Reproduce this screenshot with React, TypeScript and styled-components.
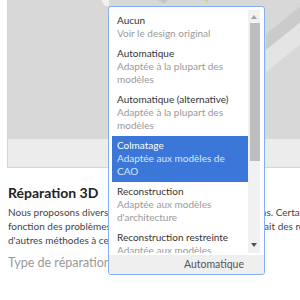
import React from "react";
import styled, { createGlobalStyle } from "styled-components";

const GlobalStyle = createGlobalStyle`
  html, body { margin: 0; padding: 0; background: #fff; overflow: hidden; }
  body { font-family: Lato, "Open Sans", sans-serif; }
`;

const Page = styled.div`
  position: relative;
  width: 300px;
  height: 300px;
  padding-left: 7px;
  box-sizing: border-box;
  overflow: hidden;
`;

const Card = styled.div`
  width: 340px;
  border: 1px solid #d4d4d4;
  border-top: none;
`;

const Preview = styled.div`
  height: 139px;
  background: #d8d8d8;
  svg { display: block; }
`;

const Strip = styled.div`
  height: 28px;
  background: #ececec;
`;

const Content = styled.div`
  padding: 15px 0 0 1px;
`;

const Heading = styled.h2`
  margin: 0;
  font-family: Lato, sans-serif;
  font-weight: 700;
  font-size: 14px;
  line-height: 19px;
  color: #222;
`;

const Body = styled.div`
  margin-top: 3px;
  font-size: 10px;
  line-height: 14px;
  color: #444;
`;

const Line = styled.div`
  white-space: nowrap;
`;

const TypeRow = styled.div`
  margin-top: 8px;
  font-size: 12.5px;
  line-height: 16px;
  color: #999;
`;

const Dropdown = styled.div`
  position: absolute;
  left: 108px;
  top: 6px;
  width: 157px;
  height: 269px;
  box-sizing: border-box;
  border: 1px solid #86aef0;
  border-radius: 3px;
  background: #fff;
  display: flex;
  flex-direction: column;
  overflow: hidden;
`;

const DropBody = styled.div`
  flex: 1;
  min-height: 0;
  display: flex;
  padding: 3px 4px 0 3px;
`;

const List = styled.div`
  flex: 1;
  min-width: 0;
  overflow: hidden;
  padding-top: 1px;
`;

const Item = styled.div<{ $selected?: boolean }>`
  padding: 3px 5px 4px;
  font-size: 10px;
  line-height: 13px;
  background: ${(p) => (p.$selected ? "#3a77d8" : "transparent")};
`;

const Title = styled.div<{ $selected?: boolean }>`
  color: ${(p) => (p.$selected ? "#fff" : "#333")};
`;

const Sub = styled.div<{ $selected?: boolean }>`
  color: ${(p) => (p.$selected ? "#dbe6f8" : "#9a9a9a")};
`;

const Scrollbar = styled.div`
  width: 12px;
  background: #f1f1f1;
  display: flex;
  flex-direction: column;
  align-items: flex-end;
`;

const Arrow = styled.div<{ $down?: boolean }>`
  width: 12px;
  height: ${(p) => (p.$down ? "17px" : "13px")};
  display: flex;
  justify-content: center;
  align-items: center;
  svg { display: block; }
`;

const Thumb = styled.div`
  width: 10px;
  height: 138px;
  background: #bdbdbd;
`;

const Track = styled.div`
  flex: 1;
`;

const Footer = styled.div`
  margin-top: 2px;
  height: 19px;
  background: #efefef;
  text-align: right;
  padding-right: 20px;
  font-size: 10.5px;
  line-height: 19px;
  color: #555;
`;

const options = [
  { title: "Aucun", sub: "Voir le design original" },
  { title: "Automatique", sub: "Adaptée à la plupart des modèles" },
  { title: "Automatique (alternative)", sub: "Adaptée à la plupart des modèles" },
  { title: "Colmatage", sub: "Adaptée aux modèles de CAO", selected: true },
  { title: "Reconstruction", sub: "Adaptée aux modèles d'architecture" },
  { title: "Reconstruction restreinte", sub: "Adaptée aux modèles" },
];

export default function App() {
  return (
    <>
      <GlobalStyle />
      <Page>
        <Card>
          <Preview>
            <svg width="340" height="139" viewBox="0 0 340 139">
              <polygon points="258,50 300,16 340,-10 340,0 300,0 258,34" fill="#cbcbcb" />
              <polygon points="258,72 300,38 340,10 340,-10 300,16 258,50" fill="#e4e4e4" />
              <polygon points="93,0 101,0 101,6 97,6" fill="#f1f1f1" />
              <polygon points="150,0 160,0 156,4" fill="#c6c6c6" />
              <polygon points="197,0 200,0 199,3" fill="#b8e07a" />
            </svg>
          </Preview>
          <Strip />
        </Card>
        <Content>
          <Heading>Réparation 3D</Heading>
          <Body>
            <Line>Nous proposons diverses options de réparation de créations. Certaines</Line>
            <Line>fonction des problèmes détectés. Si le rendu ne vous satisfait des retouches</Line>
            <Line>d'autres méthodes à ce niveau peuvent être essayées.</Line>
          </Body>
          <TypeRow>Type de réparation:</TypeRow>
        </Content>
        <Dropdown>
          <DropBody>
            <List>
              {options.map((o) => (
                <Item key={o.title} $selected={o.selected}>
                  <Title $selected={o.selected}>{o.title}</Title>
                  <Sub $selected={o.selected}>{o.sub}</Sub>
                </Item>
              ))}
            </List>
            <Scrollbar>
              <Arrow>
                <svg width="6" height="4" viewBox="0 0 6 4">
                  <polygon points="0,4 6,4 3,0" fill="#a3a3a3" />
                </svg>
              </Arrow>
              <Thumb />
              <Track />
              <Arrow $down>
                <svg width="6" height="4" viewBox="0 0 6 4">
                  <polygon points="0,0 6,0 3,4" fill="#505050" />
                </svg>
              </Arrow>
            </Scrollbar>
          </DropBody>
          <Footer>Automatique</Footer>
        </Dropdown>
      </Page>
    </>
  );
}
